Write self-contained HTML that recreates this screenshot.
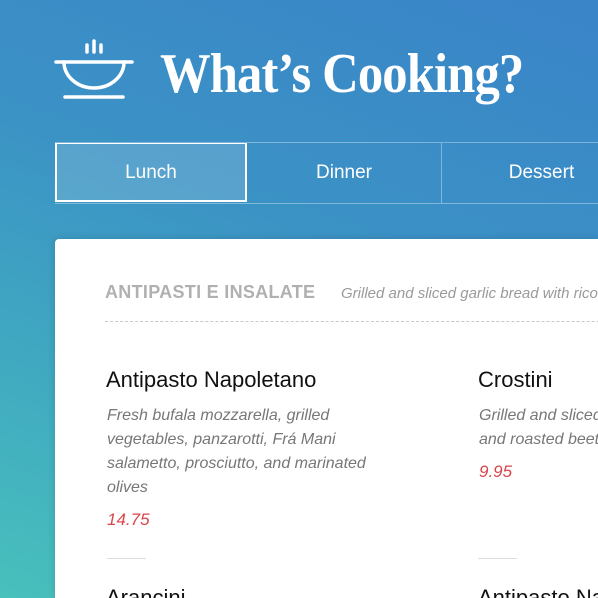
<!DOCTYPE html>
<html><head><meta charset="utf-8"><style>
html,body{margin:0;padding:0;width:598px;height:598px;overflow:hidden}
body{background:linear-gradient(200deg,#3a84c8 0%,#3b92c5 40%,#40a9c1 70%,#48c0bc 100%);font-family:"Liberation Sans","DejaVu Sans",sans-serif;position:relative}
.title{position:absolute;left:160px;top:42px;font-family:"Liberation Serif",serif;font-weight:bold;font-size:56px;color:#fff;letter-spacing:-1px;white-space:nowrap;transform:scaleX(.905);transform-origin:0 0}
.tabs{position:absolute;left:55px;top:142px;width:543px;height:60px;border-top:1px solid rgba(255,255,255,.35);border-bottom:1px solid rgba(255,255,255,.35);overflow:hidden}
.tab{position:absolute;top:0;height:60px;line-height:60px;text-align:center;color:#fff;font-size:19px;border-right:1px solid rgba(255,255,255,.35);box-sizing:border-box}
.card{position:absolute;left:55px;top:239px;width:543px;height:359px;background:#fff;border-radius:4px 0 0 0;box-shadow:0 0 8px rgba(0,0,0,.15);overflow:hidden}
.sec{position:absolute;left:50px;top:43px;font-size:18px;font-weight:bold;color:#b0b0b0;letter-spacing:.3px;white-space:nowrap}
.sub{position:absolute;left:286px;top:46px;font-size:15px;font-style:italic;color:#9a9a9a;white-space:nowrap}
.dash{position:absolute;left:50px;top:82px;width:600px;border-top:1px dashed #c8c8c8}
.name{position:absolute;font-size:22px;color:#111;white-space:nowrap}
.desc{position:absolute;font-size:16px;font-style:italic;color:#777;line-height:24px;white-space:nowrap}
.price{position:absolute;font-size:17px;font-style:italic;color:#d9454c}
.hr{position:absolute;width:39px;border-top:1px solid #ddd}
</style></head><body>
<svg style="position:absolute;left:54px;top:38px" width="80" height="62" viewBox="0 0 80 62">
<g stroke="#fff" stroke-width="3.5" fill="none" stroke-linecap="round">
<line x1="33" y1="7" x2="33" y2="14"/><line x1="40" y1="3" x2="40" y2="14"/><line x1="47" y1="7" x2="47" y2="14"/>
<line x1="2" y1="24" x2="10" y2="24"/><line x1="70" y1="24" x2="78" y2="24"/>
<path d="M10 24 L70 24 A30 26 0 0 1 10 24 Z"/>
<line x1="11" y1="59" x2="69" y2="59"/>
</g></svg>
<div class="title">What’s Cooking?</div>
<div class="tabs">
<div class="tab" style="left:0;width:192px;background:rgba(255,255,255,.15);border:2px solid #fff;top:-1px;height:60px;line-height:58px">Lunch</div>
<div class="tab" style="left:192px;width:195px">Dinner</div>
<div class="tab" style="left:387px;width:200px">Dessert</div>
</div>
<div class="card">
<div class="sec">ANTIPASTI E INSALATE</div>
<div class="sub">Grilled and sliced garlic bread with ricotta</div>
<div class="dash"></div>
<div class="name" style="left:51px;top:128px">Antipasto Napoletano</div>
<div class="desc" style="left:52px;top:165px">Fresh bufala mozzarella, grilled<br>vegetables, panzarotti, Frá Mani<br>salametto, prosciutto, and marinated<br>olives</div>
<div class="price" style="left:52px;top:271px">14.75</div>
<div class="hr" style="left:52px;top:319px"></div>
<div class="name" style="left:51px;top:346px">Arancini</div>
<div class="name" style="left:423px;top:128px">Crostini</div>
<div class="desc" style="left:424px;top:165px">Grilled and sliced garlic<br>and roasted beets</div>
<div class="price" style="left:424px;top:223px">9.95</div>
<div class="hr" style="left:423px;top:319px"></div>
<div class="name" style="left:423px;top:346px">Antipasto Napoletano</div>
</div>
</body></html>
